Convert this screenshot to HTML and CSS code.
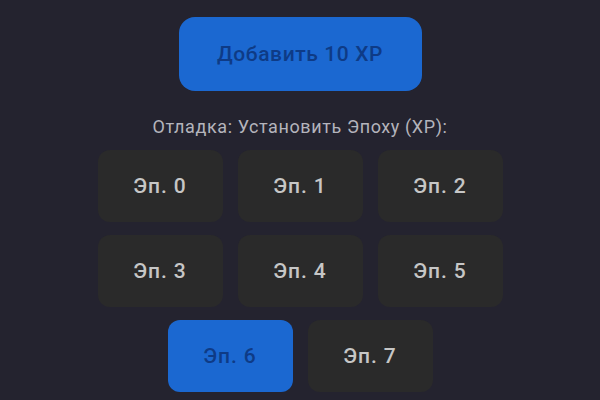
FILE: index.html
```html
<!DOCTYPE html>
<html lang="ru">
<head>
<meta charset="utf-8">
<link rel="stylesheet" href="styles.css">
</head>
<body>
<main class="panel">
  <button class="btn-main">Добавить 10 XP</button>
  <p class="label">Отладка: Установить Эпоху (XP):</p>
  <div class="epochs">
    <button class="ep">Эп. 0</button>
    <button class="ep">Эп. 1</button>
    <button class="ep">Эп. 2</button>
    <button class="ep">Эп. 3</button>
    <button class="ep">Эп. 4</button>
    <button class="ep">Эп. 5</button>
    <button class="ep ep-active">Эп. 6</button>
    <button class="ep">Эп. 7</button>
  </div>
</main>
</body>
</html>
```
FILE: styles.css
```css
html, body {
  margin: 0;
  padding: 0;
  background: #24232f;
  height: 100%;
  overflow: hidden;
}
body {
  font-family: Roboto, "Noto Sans", sans-serif;
}
.panel {
  display: flex;
  flex-direction: column;
  align-items: center;
  padding-top: 17px;
}
button {
  font-family: inherit;
  border: none;
  cursor: pointer;
}
.btn-main {
  width: 243px;
  height: 74px;
  border-radius: 16px;
  background: #1b68d1;
  color: #0e3b86;
  font-size: 21px;
  font-weight: 500;
  letter-spacing: 0.6px;
}
.label {
  margin: 25px 0 0;
  font-size: 18px;
  line-height: 22px;
  color: #b4b4bc;
  letter-spacing: 0.6px;
}
.epochs {
  margin-top: 12px;
  width: 405px;
  display: flex;
  flex-wrap: wrap;
  justify-content: center;
  gap: 13px 15px;
}
.ep {
  width: 125px;
  height: 72px;
  border-radius: 12px;
  background: #2a2a2a;
  color: #c6c6c6;
  font-size: 21px;
  font-weight: 500;
  letter-spacing: 0.9px;
}
.ep-active {
  background: #1b68d1;
  color: #0e3b86;
}
```
